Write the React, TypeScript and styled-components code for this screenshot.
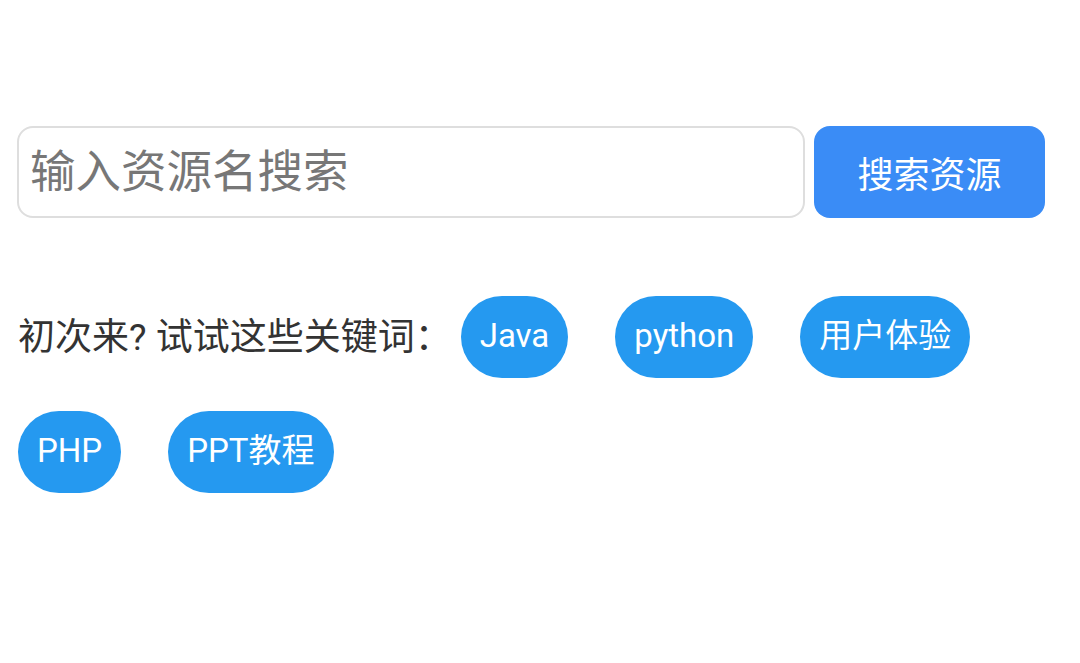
import React from "react";
import styled, { createGlobalStyle } from "styled-components";

const Global = createGlobalStyle`
  html, body { margin: 0; padding: 0; background: #ffffff; }
  body { font-family: Roboto, "Noto Sans CJK SC", sans-serif; }
  * { box-sizing: border-box; }
`;

const Page = styled.div`
  width: 1080px;
  height: 663px;
  padding: 126px 35px 0 17px;
  display: flex;
  flex-direction: column;
`;

const SearchRow = styled.div`
  display: flex;
  align-items: stretch;
  gap: 9px;
  height: 92px;
`;

const SearchInput = styled.input`
  flex: 0 0 788px;
  height: 92px;
  border: 2px solid #dedede;
  border-radius: 16px;
  padding: 0 0 0 11px;
  font-family: Roboto, "Noto Sans CJK SC", sans-serif;
  font-size: 45.5px;
  color: #333;
  outline: none;
  background: #fff;
  &::placeholder { color: #777777; }
`;

const SearchButton = styled.button`
  flex: 0 0 231px;
  height: 92px;
  border: none;
  border-radius: 16px;
  background: #3a8cf6;
  color: #ffffff;
  font-family: Roboto, "Noto Sans CJK SC", sans-serif;
  font-size: 36px;
  padding: 0;
  cursor: pointer;
`;

const Tags = styled.div`
  margin-top: 78px;
  margin-left: 1px;
  display: flex;
  flex-wrap: wrap;
  align-items: center;
  row-gap: 33px;
`;

const Label = styled.span`
  font-size: 37px;
  color: #333333;
  margin-right: 9px;
  margin-bottom: 6px;
  white-space: nowrap;
`;

const Chip = styled.button`
  height: 82px;
  padding: 0 19px;
  margin-right: 47px;
  border: none;
  border-radius: 41px;
  background: #2599f0;
  color: #ffffff;
  font-family: Roboto, "Noto Sans CJK SC", sans-serif;
  font-size: 33px;
  line-height: 1;
  padding-bottom: 4px;
  cursor: pointer;
  white-space: nowrap;
`;

const keywords = ["Java", "python", "用户体验", "PHP", "PPT教程"];

export default function App() {
  return (
    <>
      <Global />
      <Page>
        <SearchRow>
          <SearchInput placeholder="输入资源名搜索" />
          <SearchButton>搜索资源</SearchButton>
        </SearchRow>
        <Tags>
          <Label>初次来? 试试这些关键词：</Label>
          {keywords.map((k) => (
            <Chip key={k}>{k}</Chip>
          ))}
        </Tags>
      </Page>
    </>
  );
}
